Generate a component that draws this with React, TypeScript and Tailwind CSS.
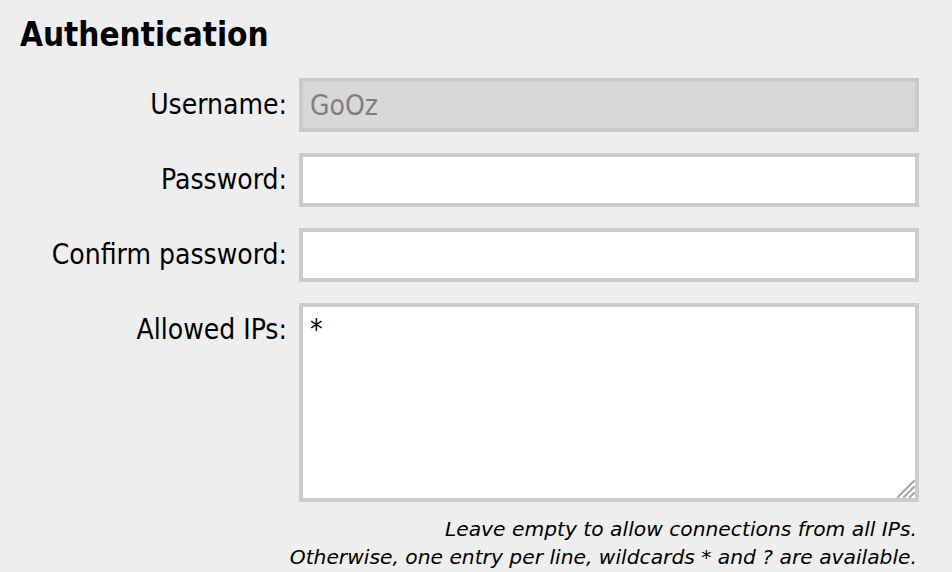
export default function App() {
  const font = { fontFamily: '"DejaVu Sans Condensed", "DejaVu Sans", Tahoma, sans-serif' };

  return (
    <div className="min-h-[572px] w-[952px] bg-[#eeeeee] text-black" style={font}>
      <div className="pl-5 pt-[15px]">
        <h2 className="text-[33px] leading-[40px] font-bold">Authentication</h2>
      </div>

      <form className="mt-[23px] grid grid-cols-[287px_620px] gap-x-3 gap-y-[21px]">
        <label className="text-right text-[28px] leading-[32px] pt-[11px]">Username:</label>
        <input
          disabled
          value="GoOz"
          readOnly
          className="h-[54px] border-4 border-[#cacaca] bg-[#d8d8d8] px-[7px] text-[28px] leading-[32px] text-[#7f7f7f] outline-none"
          style={font}
        />

        <label className="text-right text-[28px] leading-[32px] pt-[11px]">Password:</label>
        <input
          type="password"
          className="h-[54px] border-4 border-[#cccccc] bg-white px-[7px] text-[28px] leading-[32px] outline-none"
          style={font}
        />

        <label className="text-right text-[28px] leading-[32px] pt-[11px]">Confirm password:</label>
        <input
          type="password"
          className="h-[54px] border-4 border-[#cccccc] bg-white px-[7px] text-[28px] leading-[32px] outline-none"
          style={font}
        />

        <label className="text-right text-[28px] leading-[32px] pt-[11px]">Allowed IPs:</label>
        <div className="relative h-[199px]">
          <textarea
            defaultValue="*"
            className="block h-full w-full resize-none border-4 border-[#cccccc] bg-white px-[7px] py-[7px] text-[28px] leading-[32px] outline-none"
            style={font}
          />
          <svg
            className="pointer-events-none absolute bottom-1 right-1"
            width="20"
            height="20"
            viewBox="0 0 20 20"
          >
            <g stroke="#a6a6a6" strokeWidth="2" strokeLinecap="square">
              <line x1="3" y1="19" x2="19" y2="3" />
              <line x1="9" y1="19" x2="19" y2="9" />
              <line x1="15" y1="19" x2="19" y2="15" />
            </g>
          </svg>
        </div>

        <p
          className="col-span-2 -mt-[8px] pr-[2px] text-right text-[20.25px] leading-[28px] italic whitespace-nowrap"
          style={{ fontFamily: '"DejaVu Sans", Tahoma, sans-serif' }}
        >
          Leave empty to allow connections from all IPs.
          <br />
          Otherwise, one entry per line, wildcards * and ? are available.
        </p>
      </form>
    </div>
  );
}
